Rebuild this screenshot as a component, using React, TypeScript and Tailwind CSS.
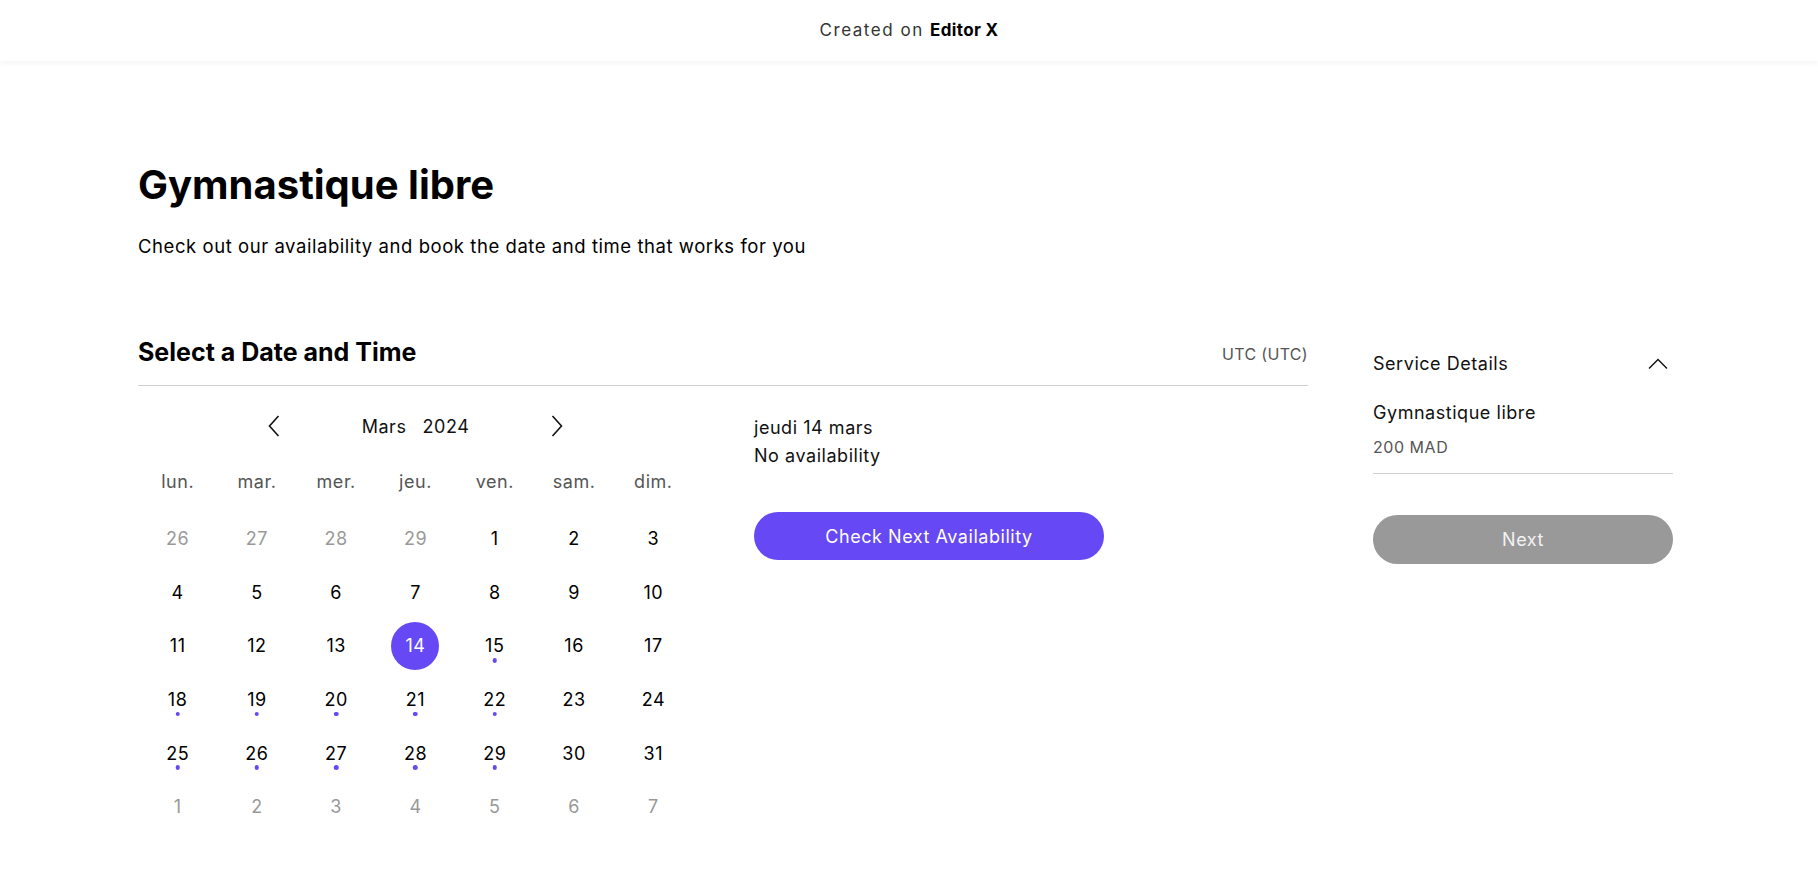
import { useState } from "react";

const WEEKDAYS = ["lun.", "mar.", "mer.", "jeu.", "ven.", "sam.", "dim."];

type Day = { n: number; muted?: "past" | "next"; dot?: boolean };

const days: Day[] = [
  { n: 26, muted: "past" },
  { n: 27, muted: "past" },
  { n: 28, muted: "past" },
  { n: 29, muted: "past" },
  ...Array.from({ length: 31 }, (_, i) => ({
    n: i + 1,
    dot: [15, 18, 19, 20, 21, 22, 25, 26, 27, 28, 29].includes(i + 1),
  })),
  ...Array.from({ length: 7 }, (_, i) => ({ n: i + 1, muted: "next" as const })),
];

function Chevron({ dir }: { dir: "left" | "right" }) {
  return (
    <svg width="12" height="22" viewBox="0 0 12 22" fill="none">
      <path
        d={dir === "left" ? "M10.5 1 L1.5 11 L10.5 21" : "M1.5 1 L10.5 11 L1.5 21"}
        stroke="#111"
        strokeWidth="1.6"
      />
    </svg>
  );
}

export default function App() {
  const [selected, setSelected] = useState(14);

  return (
    <div className="min-h-screen bg-white font-['Inter','Liberation_Sans',sans-serif] text-[#111]">
      <header className="relative z-10 flex h-[61px] items-center justify-center bg-white shadow-[0_2px_6px_rgba(0,0,0,0.05)]">
        <p className="text-[17px] tracking-[0.09em] text-[#333]">
          Created on <span className="font-bold tracking-[0.02em] text-black">Editor X</span>
        </p>
      </header>

      <main className="px-[138px] pt-[100px]">
        <h1 className="text-[40px] leading-[48px] font-bold text-black">Gymnastique libre</h1>
        <p className="mt-[23px] text-[18.5px] leading-[28px] tracking-[0.03em] text-black">
          Check out our availability and book the date and time that works for you
        </p>

        <div className="mt-[76px] flex gap-[65px] text-[18px] tracking-[0.03em]">
          <section className="w-[1170px]">
            <div className="flex items-center justify-between border-b border-[#cfcfcf] pb-[17px]">
              <h2 className="text-[25px] leading-[32px] font-bold tracking-normal text-black">
                Select a Date and Time
              </h2>
              <span className="mt-[4px] text-[16px] tracking-[0.02em] text-[#555]">UTC (UTC)</span>
            </div>

            <div className="flex gap-[61px] pt-[20px]">
              <div className="w-[555px]">
                <div className="mx-auto flex h-10 w-[296px] items-center justify-between">
                  <button className="flex items-center">
                    <Chevron dir="left" />
                  </button>
                  <div className="flex gap-[16px]">
                    <span>Mars</span>
                    <span>2024</span>
                  </div>
                  <button className="flex items-center">
                    <Chevron dir="right" />
                  </button>
                </div>

                <div className="mt-[15px] grid h-10 grid-cols-7 items-center text-center text-[18px] text-[#555]">
                  {WEEKDAYS.map((d) => (
                    <span key={d}>{d}</span>
                  ))}
                </div>

                <div className="mt-[11px] grid grid-cols-7">
                  {days.map((d, i) => {
                    const isSel = !d.muted && d.n === selected;
                    return (
                      <div key={i} className="relative flex h-[53.6px] items-center justify-center">
                        <button
                          onClick={() => !d.muted && setSelected(d.n)}
                          className={
                            isSel
                              ? "flex h-[48px] w-[48px] items-center justify-center rounded-full bg-[#6648f5] text-white"
                              : d.muted
                                ? "text-[#999]"
                                : "text-black"
                          }
                        >
                          {d.n}
                        </button>
                        {d.dot && !isSel && (
                          <span className="absolute top-[39px] left-1/2 h-[4.5px] w-[4.5px] -translate-x-1/2 rounded-full bg-[#6648f5]" />
                        )}
                      </div>
                    );
                  })}
                </div>
              </div>

              <div className="pt-[8px]">
                <p className="leading-[28px]">jeudi {selected} mars</p>
                <p className="leading-[28px]">No availability</p>
                <button className="mt-[42px] h-[48px] w-[350px] rounded-full bg-[#6648f5] text-white">
                  Check Next Availability
                </button>
              </div>
            </div>
          </section>

          <aside className="w-[300px] pt-[14px]">
            <div className="flex items-center justify-between">
              <span className="leading-[28px]">Service Details</span>
              <svg width="20" height="12" viewBox="0 0 20 12" fill="none" className="mr-[5px]">
                <path d="M1 10.5 L10 1.5 L19 10.5" stroke="#111" strokeWidth="1.4" />
              </svg>
            </div>
            <div className="border-b border-[#cfcfcf] pt-[21px] pb-[14px]">
              <p className="leading-[28px]">Gymnastique libre</p>
              <p className="mt-[8px] text-[16px] leading-[24px] text-[#555]">200 MAD</p>
            </div>
            <button className="mt-[41px] h-[49px] w-full rounded-full bg-[#999999] text-[#f2f2f2]">
              Next
            </button>
          </aside>
        </div>
      </main>
    </div>
  );
}
